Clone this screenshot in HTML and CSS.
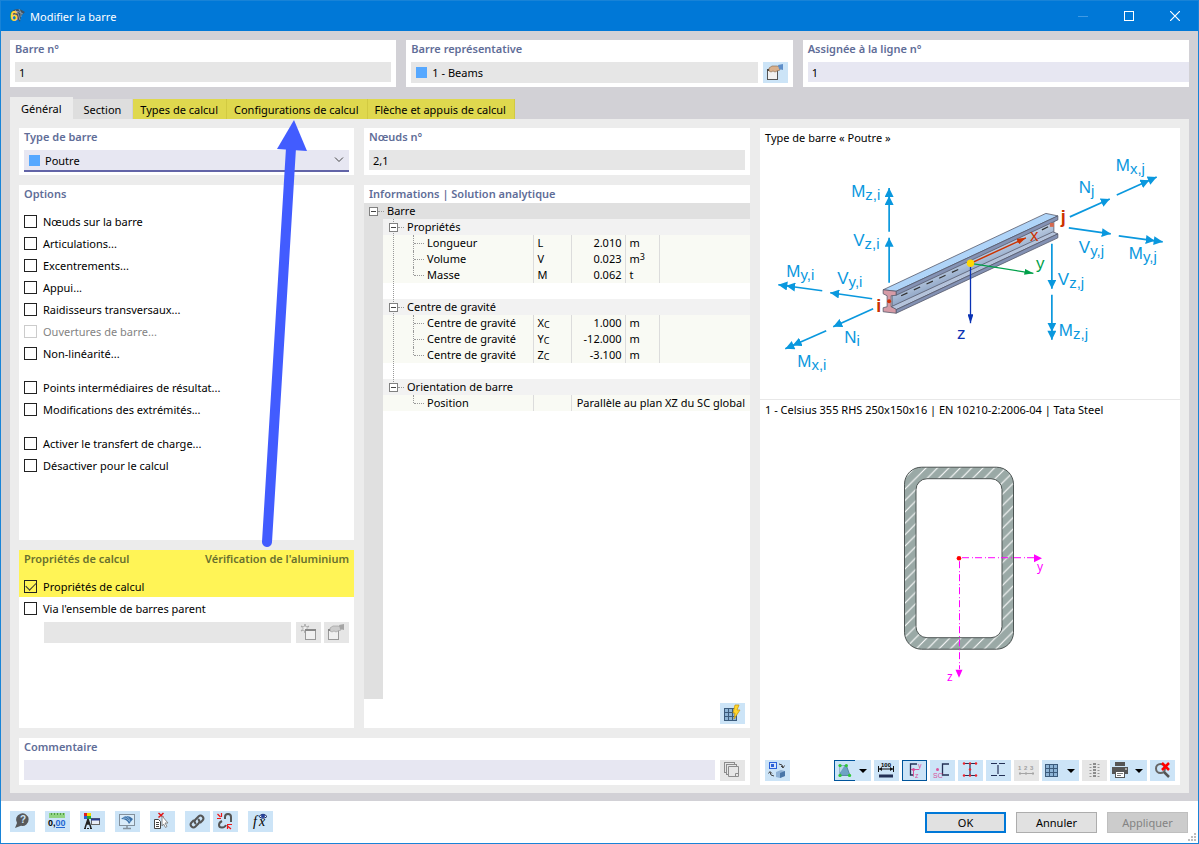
FILE: index.html
```html
<!DOCTYPE html>
<html lang="fr">
<head>
  <meta charset="UTF-8" />
  <meta name="viewport" content="width=device-width, initial-scale=1.0" />
  <title>Modifier la barre</title>
  <link rel="stylesheet" href="styles.css">
</head>
<body>
  <div class="window">
    <header class="titlebar">
      <svg class="app-icon" width="16" height="18" viewBox="0 0 16 18">
        <path d="M2 5Q8 -1 16 5L12 9L11 15L7 10z" fill="#3f5364"/>
        <path d="M4 5Q9 3 14 7M6 3Q10 6 11 13M10 2Q13 6 12 10" stroke="#8fa9bd" stroke-width=".8" fill="none"/>
        <text x="1" y="14" class="app-six">6</text>
      </svg>
      <h1>Modifier la barre</h1>
      <div class="window-buttons">
        <button type="button" aria-label="Réduire" disabled>
          <svg width="10" height="10" viewBox="0 0 10 10"><path d="M0 5.5H10" stroke="#3f9ae4"/></svg>
        </button>
        <button type="button" aria-label="Agrandir">
          <svg width="10" height="10" viewBox="0 0 10 10"><rect x=".5" y=".5" width="9" height="9" fill="none" stroke="#fff"/></svg>
        </button>
        <button type="button" aria-label="Fermer">
          <svg width="10" height="10" viewBox="0 0 10 10"><path d="M0 0L10 10M10 0L0 10" stroke="#fff" stroke-width="1.2"/></svg>
        </button>
      </div>
    </header>

    <main class="body">
      <!-- Identification -->
      <div class="top-cards">
        <div class="card">
          <label class="card-title" for="barNo">Barre n°</label>
          <input class="field" type="text" id="barNo" value="1" readonly>
        </div>
        <div class="card">
          <label class="card-title" for="repBar">Barre représentative</label>
          <div class="field-row">
            <div class="field combo tall">
              <span class="swatch"></span>
              <input type="text" id="repBar" value="1 - Beams" readonly>
            </div>
            <button type="button" class="icon-btn" aria-label="Modifier la barre représentative">
              <svg width="25" height="21" viewBox="0 0 25 21">
                <rect x="4.500" y="7.500" width="10" height="10" fill="#f2f2f2" stroke="#555"/>
                <path d="M4 8h11" stroke="#444" stroke-width="2"/>
                <path d="M6 6l3-2h5l3 1v3l-3 1-2 1-2-1-2 1-2-1z" fill="#d9b08c" stroke="#80644c" stroke-width=".6"/>
                <path d="M15 3l5-1v6l-4-1z" fill="#5f8fc9"/>
              </svg>
            </button>
          </div>
        </div>
        <div class="card flush">
          <label class="card-title" for="lineNo">Assignée à la ligne n°</label>
          <input class="field editable" type="text" id="lineNo" value="1">
        </div>
      </div>

      <nav class="tabs">
        <button type="button" class="tab active">Général</button>
        <button type="button" class="tab plain">Section</button>
        <button type="button" class="tab marked">Types de calcul</button>
        <button type="button" class="tab marked">Configurations de calcul</button>
        <button type="button" class="tab marked">Flèche et appuis de calcul</button>
      </nav>

      <div class="pane">
        <div class="card type-card">
          <label class="card-title" for="barType">Type de barre</label>
          <div class="field combo editable underlined">
            <span class="swatch"></span>
            <select id="barType"><option>Poutre</option></select>
            <svg class="chevron" width="10" height="6" viewBox="0 0 10 6"><path d="M1 .5L5 4.500L9 .5" fill="none" stroke="#444"/></svg>
          </div>
        </div>

        <div class="card nodes-card">
          <label class="card-title" for="nodes">Nœuds n°</label>
          <input class="field" type="text" id="nodes" value="2,1" readonly>
        </div>

        <!-- Options -->
        <div class="card options-card">
          <h2 class="card-title">Options</h2>
          <div class="checks">
            <label class="check"><input type="checkbox">Nœuds sur la barre</label>
            <label class="check"><input type="checkbox">Articulations...</label>
            <label class="check"><input type="checkbox">Excentrements...</label>
            <label class="check"><input type="checkbox">Appui...</label>
            <label class="check"><input type="checkbox">Raidisseurs transversaux...</label>
            <label class="check disabled"><input type="checkbox" disabled>Ouvertures de barre...</label>
            <label class="check"><input type="checkbox">Non-linéarité...</label>
          </div>
          <div class="checks">
            <label class="check"><input type="checkbox">Points intermédiaires de résultat...</label>
            <label class="check"><input type="checkbox">Modifications des extrémités...</label>
          </div>
          <div class="checks">
            <label class="check"><input type="checkbox">Activer le transfert de charge...</label>
            <label class="check"><input type="checkbox">Désactiver pour le calcul</label>
          </div>
        </div>

        <!-- Design properties -->
        <div class="card design-card">
          <div class="highlight">
            <div class="design-head">
              <h2 class="card-title">Propriétés de calcul</h2>
              <span class="card-title">Vérification de l'aluminium</span>
            </div>
            <label class="check"><input type="checkbox" checked>Propriétés de calcul</label>
          </div>
          <label class="check"><input type="checkbox" id="viaSet">Via l'ensemble de barres parent</label>
          <div class="field-row set-row">
            <input class="field tall" type="text" aria-label="Ensemble de barres parent" disabled>
            <div class="btn-pair">
              <button type="button" class="icon-btn off" aria-label="Nouvel ensemble" disabled>
                <svg width="25" height="21" viewBox="0 0 25 21">
                  <path d="M9 2l1 3 3-1-2 2.500 2 2.500-3-1-1 3-1-3-3 1 2-2.500L5 4l3 1z" fill="#eee" stroke="#999" stroke-width=".7"/>
                  <rect x="9.500" y="7.500" width="10" height="10" fill="#f0f0f0" stroke="#999"/>
                  <path d="M9 8h11" stroke="#888" stroke-width="2"/>
                </svg>
              </button>
              <button type="button" class="icon-btn off" aria-label="Modifier l'ensemble" disabled>
                <svg width="25" height="21" viewBox="0 0 25 21">
                  <rect x="4.500" y="7.500" width="10" height="10" fill="#f0f0f0" stroke="#999"/>
                  <path d="M4 8h11" stroke="#888" stroke-width="2"/>
                  <path d="M6 6l3-2h5l3 1v3l-3 1-2 1-2-1-2 1-2-1z" fill="#ccc" stroke="#999" stroke-width=".6"/>
                  <path d="M15 3l5-1v6l-4-1z" fill="#a5a5a5"/>
                </svg>
              </button>
            </div>
          </div>
        </div>

        <!-- Information tree -->
        <div class="card info-card">
          <h2 class="card-title">Informations | Solution analytique</h2>
          <div class="tree">
            <table>
              <colgroup>
                <col class="c-gutter"><col class="c-name"><col class="c-symbol"><col class="c-value"><col class="c-unit"><col>
              </colgroup>
              <tr class="root">
                <td colspan="6"><div class="node root-node"><span class="toggle"></span><span class="dash"></span>Barre</div></td>
              </tr>
              <tr class="group">
                <td></td>
                <td class="trunk" colspan="5"><div class="node"><span class="toggle"></span><span class="dash"></span>Propriétés</div></td>
              </tr>
              <tr class="leaf">
                <td></td><td class="trunk"><div class="node"><span class="branch"></span>Longueur</div></td>
                <td>L</td><td class="num">2.010</td><td>m</td><td></td>
              </tr>
              <tr class="leaf">
                <td></td><td class="trunk"><div class="node"><span class="branch"></span>Volume</div></td>
                <td>V</td><td class="num">0.023</td><td>m<sup>3</sup></td><td></td>
              </tr>
              <tr class="leaf">
                <td></td><td class="trunk"><div class="node"><span class="branch last"></span>Masse</div></td>
                <td>M</td><td class="num">0.062</td><td>t</td><td></td>
              </tr>
              <tr class="spacer"><td></td><td class="trunk" colspan="5"></td></tr>
              <tr class="group">
                <td></td>
                <td class="trunk" colspan="5"><div class="node"><span class="toggle"></span><span class="dash"></span>Centre de gravité</div></td>
              </tr>
              <tr class="leaf">
                <td></td><td class="trunk"><div class="node"><span class="branch"></span>Centre de gravité</div></td>
                <td>X<sub>C</sub></td><td class="num">1.000</td><td>m</td><td></td>
              </tr>
              <tr class="leaf">
                <td></td><td class="trunk"><div class="node"><span class="branch"></span>Centre de gravité</div></td>
                <td>Y<sub>C</sub></td><td class="num">-12.000</td><td>m</td><td></td>
              </tr>
              <tr class="leaf">
                <td></td><td class="trunk"><div class="node"><span class="branch last"></span>Centre de gravité</div></td>
                <td>Z<sub>C</sub></td><td class="num">-3.100</td><td>m</td><td></td>
              </tr>
              <tr class="spacer"><td></td><td class="trunk" colspan="5"></td></tr>
              <tr class="group">
                <td></td>
                <td class="trunk end" colspan="5"><div class="node"><span class="toggle"></span><span class="dash"></span>Orientation de barre</div></td>
              </tr>
              <tr class="leaf">
                <td></td><td><div class="node"><span class="branch last"></span>Position</div></td>
                <td></td><td class="num wide" colspan="3">Parallèle au plan XZ du SC global</td>
              </tr>
            </table>
          </div>
          <div class="info-actions">
            <button type="button" class="icon-btn" aria-label="Calculer">
              <svg width="25" height="21" viewBox="0 0 25 21">
                <rect x="4" y="5" width="13" height="13" fill="#8db4d6"/>
                <path d="M4.500 5v13M8.500 5v13M12.500 5v13M16.500 5v13M4 5.500h13M4 9.500h13M4 13.500h13M4 17.500h13" stroke="#3b5b7c"/>
                <path d="M15 2h4l-2 5h3l-6 9 1-6h-2z" fill="#ffd62e" stroke="#c79300" stroke-width=".7"/>
              </svg>
            </button>
          </div>
        </div>

        <div class="card comment-card">
          <label class="card-title" for="comment">Commentaire</label>
          <div class="field-row">
            <input class="field editable" type="text" id="comment">
            <button type="button" class="icon-btn off" aria-label="Commentaires enregistrés">
              <svg width="25" height="21" viewBox="0 0 25 21" fill="#e6e6e6" stroke="#8c8c8c">
                <rect x="4.500" y="2.500" width="10" height="10"/>
                <rect x="6.500" y="4.500" width="10" height="10"/>
                <path d="M8.500 6.500h10v10h-10zM15.500 16.500v-3h3"/>
              </svg>
            </button>
          </div>
        </div>

        <!-- Graphics -->
        <div class="card view-card">
          <section class="view beam-view">
            <h2>Type de barre « Poutre »</h2>
            <svg class="drawing force" viewBox="760 148 420 251">
              <defs>
                <marker id="f1" markerUnits="userSpaceOnUse" markerWidth="9" markerHeight="9" refX="9" refY="4.500" orient="auto"><path d="M0 0L9 4.500L0 9z" fill="#0a98de"/></marker>
                <marker id="f2" markerUnits="userSpaceOnUse" markerWidth="17" markerHeight="9" refX="17" refY="4.500" orient="auto"><path d="M0 0L9 4.500L0 9zM8 0L17 4.500L8 9z" fill="#0a98de"/></marker>
                <marker id="ax" markerUnits="userSpaceOnUse" markerWidth="9" markerHeight="6" refX="9" refY="3" orient="auto"><path d="M0 0L9 3L0 6z" fill="#cc3300"/></marker>
                <marker id="ay" markerUnits="userSpaceOnUse" markerWidth="9" markerHeight="6" refX="9" refY="3" orient="auto"><path d="M0 0L9 3L0 6z" fill="#00a04a"/></marker>
                <marker id="az" markerUnits="userSpaceOnUse" markerWidth="9" markerHeight="6" refX="9" refY="3" orient="auto"><path d="M0 0L9 3L0 6z" fill="#0a32b4"/></marker>
                <linearGradient id="web" gradientUnits="userSpaceOnUse" x1="970" y1="255" x2="977" y2="272">
                  <stop offset="0" stop-color="#c3d3e6"/><stop offset="1" stop-color="#8fa5c6"/>
                </linearGradient>
              </defs>

              <!-- I-beam -->
              <g stroke="#55596b" stroke-width=".8" stroke-linejoin="round">
                <path d="M892 294L1054 219V233L892 308z" fill="url(#web)"/>
                <path d="M891 307L1053 232L1058 234L896 310z" fill="#b4c3db"/>
                <path d="M896 310L1058 234V238L896 313.500z" fill="#8391b3"/>
                <path d="M883 290L1046 213.500L1058 216L896 291.500z" fill="#afd4f8"/>
                <path d="M896 291.500L1058 216V220L896 295.500z" fill="#8492b4"/>
                <path d="M883 290L896 291.500V295.500L891 296V307L896 309.500V313.500L883 312V308L887 307V296L883 294z" fill="#d69ba6"/>
              </g>
              <path d="M901 296L964 267M1042 230L1050 226" stroke="#333" stroke-width="1.200" stroke-dasharray="7 7"/>
              <circle cx="889" cy="301.500" r="2" fill="#d0340b"/>
              <rect x="1050" y="223" width="4" height="4" fill="#d5684e"/>

              <!-- end forces and moments -->
              <g stroke="#0a98de" stroke-width="1.700">
                <path d="M889 232V188" marker-end="url(#f2)"/>
                <path d="M889 283V238" marker-end="url(#f1)"/>
                <path d="M822 291L778 285" marker-end="url(#f2)"/>
                <path d="M872 299L830 293" marker-end="url(#f1)"/>
                <path d="M873 309L833 327" marker-end="url(#f1)"/>
                <path d="M826 331L785 349" marker-end="url(#f2)"/>
                <path d="M1070 217L1110 199" marker-end="url(#f1)"/>
                <path d="M1117 195L1157 177" marker-end="url(#f2)"/>
                <path d="M1069 228L1111 234" marker-end="url(#f1)"/>
                <path d="M1119 236L1163 242" marker-end="url(#f2)"/>
                <path d="M1052 244V289" marker-end="url(#f1)"/>
                <path d="M1052 295V340" marker-end="url(#f2)"/>
              </g>

              <!-- local axes -->
              <path d="M970.500 263.500L1026 238" stroke="#cc3300" stroke-width="1.500" marker-end="url(#ax)"/>
              <path d="M970.500 263.500L1033.500 273.500" stroke="#00a04a" stroke-width="1.300" marker-end="url(#ay)"/>
              <path d="M970.500 263.500V323.500" stroke="#0a32b4" stroke-width="1.300" marker-end="url(#az)"/>
              <circle cx="970.500" cy="263.500" r="3.700" fill="#ffd800"/>

              <text x="851" y="197">M<tspan class="index" dy="3">z,i</tspan></text>
              <text x="853" y="246">V<tspan class="index" dy="3">z,i</tspan></text>
              <text x="786" y="277">M<tspan class="index" dy="3">y,i</tspan></text>
              <text x="837" y="284">V<tspan class="index" dy="3">y,i</tspan></text>
              <text x="844" y="343">N<tspan class="index" dy="3">i</tspan></text>
              <text x="797" y="367">M<tspan class="index" dy="3">x,i</tspan></text>
              <text x="1079" y="193">N<tspan class="index" dy="3">j</tspan></text>
              <text x="1116" y="171">M<tspan class="index" dy="3">x,j</tspan></text>
              <text x="1079" y="253">V<tspan class="index" dy="3">y,j</tspan></text>
              <text x="1129" y="259">M<tspan class="index" dy="3">y,j</tspan></text>
              <text x="1058" y="285">V<tspan class="index" dy="3">z,j</tspan></text>
              <text x="1059" y="336">M<tspan class="index" dy="3">z,j</tspan></text>
              <text class="end-mark" x="876" y="312">i</text>
              <text class="end-mark" x="1061" y="223">j</text>
              <text class="axis-x" x="1030" y="241">x</text>
              <text class="axis-y" x="1036" y="269">y</text>
              <text class="axis-z" x="957" y="339">z</text>
            </svg>
          </section>

          <section class="view section-view">
            <h2>1 - Celsius 355 RHS 250x150x16 | EN 10210-2:2006-04 | Tata Steel</h2>
            <svg class="drawing" viewBox="760 420 420 340">
              <defs>
                <pattern id="hatch" patternUnits="userSpaceOnUse" x="904" y="467" width="11.400" height="11.400">
                  <rect width="12" height="12" fill="#9aa9a6"/>
                  <path d="M-1 12.400L12.400 -1M-1 1L1 -1M10.400 12.400L12.400 10.400" stroke="#fff" stroke-width="1.100"/>
                </pattern>
              </defs>
              <rect x="904.500" y="467" width="109" height="182" rx="17" fill="url(#hatch)" stroke="#4d5453"/>
              <rect x="916" y="478.500" width="86" height="159" rx="11" fill="#fff" stroke="#4d5453"/>
              <g stroke="#f0f" stroke-dasharray="7 3 1 2">
                <path d="M962 557.500H1034"/>
                <path d="M959.500 561V669"/>
              </g>
              <path d="M1034 554L1042 558L1034 562zM955.500 669.500H962.500L959 677.500z" fill="#f0f"/>
              <circle cx="959" cy="558" r="2.300" fill="#f00"/>
              <text class="sec-axis" x="1037" y="571">y</text>
              <text class="sec-axis" x="947" y="681">z</text>
            </svg>

            <div class="toolbar">
              <button type="button" class="icon-btn first" aria-label="Changer de vue">
                <svg width="25" height="21" viewBox="0 0 25 21">
                  <rect x="4.500" y="2.500" width="7" height="6" fill="#d6e6fa" stroke="#2b62d9"/>
                  <rect x="6" y="4" width="3" height="3" fill="#2b62d9"/>
                  <path d="M11 12l5-2 4 1v5l-5 2-4-1z" fill="#8fb2d6"/><path d="M15 13l5-2v5l-5 2z" fill="#4a76a8"/>
                  <path d="M14 4q4 0 4 4M16 6l2 2 1.500-2.500M9 16q-4 0-4-4M7 13.500l-2-2-1.500 2" stroke="#444" fill="none"/>
                </svg>
              </button>
              <button type="button" class="icon-btn split" aria-label="Affichage de la section">
                <svg class="pressed" width="21" height="21" viewBox="0 0 21 21">
                  <path d="M5 5h7l4 11H5z" fill="#6fa3c4" stroke="#4f7fa0"/>
                  <path d="M5 5h5L5 13z" fill="#b9d7e8"/>
                  <g fill="#2fc837"><circle cx="5" cy="5" r="1.800"/><circle cx="12" cy="5" r="1.800"/><circle cx="5" cy="16" r="1.800"/><circle cx="15.500" cy="16" r="1.800"/></g>
                </svg>
                <span class="caret"></span>
              </button>
              <button type="button" class="icon-btn" aria-label="Dimensions">
                <svg width="25" height="21" viewBox="0 0 25 21">
                  <path d="M4 9h16M4.500 6v6M19.500 6v6" stroke="#111"/>
                  <path d="M5 9l3-2v4zM19 9l-3-2v4z" fill="#111"/>
                  <path d="M5 16h14" stroke="#233055" stroke-width="3"/>
                  <text class="tiny-num" x="7" y="7">100</text>
                </svg>
              </button>
              <button type="button" class="icon-btn framed" aria-label="Axes principaux">
                <svg width="25" height="21" viewBox="0 0 25 21">
                  <path d="M15 4H8.500v11H12" fill="none" stroke="#233055" stroke-width="1.300"/>
                  <path d="M9 9.500h8M11.500 9.500v7" stroke="#d9539b"/><circle cx="11.500" cy="9.500" r="1.500" fill="#d9539b"/>
                  <text class="tiny-axis" x="16" y="8">y</text><text class="tiny-axis" x="13" y="18">z</text>
                </svg>
              </button>
              <button type="button" class="icon-btn" aria-label="Centre de cisaillement">
                <svg width="25" height="21" viewBox="0 0 25 21">
                  <path d="M19 4h-6.500v11H19" fill="none" stroke="#233055" stroke-width="1.300"/>
                  <circle cx="7.500" cy="9.500" r="1.500" fill="#d9539b"/>
                  <text class="tiny-sc" x="3" y="18">SC</text>
                </svg>
              </button>
              <button type="button" class="icon-btn" aria-label="Points de contrainte">
                <svg width="25" height="21" viewBox="0 0 25 21">
                  <path d="M5 3.500h14M5 15.500h14M12 4v11" stroke="#233055" stroke-width="1.200"/>
                  <g fill="#f0202a"><circle cx="6" cy="3.500" r="1.200"/><circle cx="12" cy="3.500" r="1.200"/><circle cx="18" cy="3.500" r="1.200"/><circle cx="12" cy="9.500" r="1.200"/><circle cx="6" cy="15.500" r="1.200"/><circle cx="12" cy="15.500" r="1.200"/><circle cx="18" cy="15.500" r="1.200"/></g>
                </svg>
              </button>
              <button type="button" class="icon-btn" aria-label="Parties de section">
                <svg width="25" height="21" viewBox="0 0 25 21">
                  <path d="M5 3.500h6M13 3.500h6M5 15.500h6M13 15.500h6M12 5v9" stroke="#233055" stroke-width="1.200"/>
                </svg>
              </button>
              <button type="button" class="icon-btn off" aria-label="Numérotation" disabled>
                <svg width="25" height="21" viewBox="0 0 25 21">
                  <path d="M5 13.500h15M6 12v3M12 12v3M19 12v3" stroke="#a5a5a5"/>
                  <text class="tiny-off" x="4" y="10">1</text><text class="tiny-off" x="10" y="10">2</text><text class="tiny-off" x="16" y="10">3</text>
                </svg>
              </button>
              <button type="button" class="icon-btn split" aria-label="Grille">
                <svg width="21" height="21" viewBox="0 0 21 21">
                  <rect x="3" y="4" width="13" height="13" fill="#8db4d6"/>
                  <path d="M3.500 4v13M7.500 4v13M11.500 4v13M15.500 4v13M3 4.500h13M3 8.500h13M3 12.500h13M3 16.500h13" stroke="#3b5b7c"/>
                </svg>
                <span class="caret"></span>
              </button>
              <button type="button" class="icon-btn off" aria-label="Tableau des valeurs" disabled>
                <svg width="25" height="21" viewBox="0 0 25 21">
                  <path d="M12.500 3v15" stroke="#8c8c8c" stroke-width="3" stroke-dasharray="2 1"/>
                  <path d="M8.500 4v14M16.500 4v14" stroke="#999" stroke-width="2" stroke-dasharray="1 2"/>
                </svg>
              </button>
              <button type="button" class="icon-btn split" aria-label="Imprimer">
                <svg width="21" height="21" viewBox="0 0 21 21">
                  <path d="M5 2h10v4H5zM2 7h16v7H2z" fill="#555"/>
                  <rect x="5.500" y="11.500" width="9" height="6" fill="#fff" stroke="#555"/>
                  <path d="M7 13.500h6M7 15.500h4" stroke="#777"/>
                  <path d="M15 9h2" stroke="#fff"/>
                </svg>
                <span class="caret"></span>
              </button>
              <button type="button" class="icon-btn" aria-label="Réinitialiser le zoom">
                <svg width="25" height="21" viewBox="0 0 25 21">
                  <circle cx="10.500" cy="8.500" r="4.500" fill="none" stroke="#666" stroke-width="2"/>
                  <path d="M14 12l5 5" stroke="#555" stroke-width="2.500"/>
                  <path d="M12 3l7 7M19 3l-7 7" stroke="#f00" stroke-width="2.500"/>
                </svg>
              </button>
            </div>
          </section>
        </div>

        <!-- arrow from the design properties to the design tabs -->
        <svg class="pointer" width="50" height="430" viewBox="260 120 50 430">
          <path d="M291 148L267 542" stroke="#425cff" stroke-width="10" stroke-linecap="round"/>
          <path d="M294 120L307 151L277 149z" fill="#425cff"/>
        </svg>
      </div>
    </main>

    <footer class="footer">
      <div class="footer-tools">
        <button type="button" class="icon-btn" aria-label="Aide">
          <svg width="25" height="21" viewBox="0 0 25 21">
            <path d="M5 17l2-5a6.300 6.300 0 1 1 4 2.800z" fill="#58595b"/>
            <text class="help-mark" x="10" y="12">?</text>
          </svg>
        </button>
        <button type="button" class="icon-btn" aria-label="Unités et décimales">
          <svg width="25" height="21" viewBox="0 0 25 21">
            <rect x="4" y="2" width="16" height="5" fill="#92d483"/>
            <path d="M6.500 2v2M9.500 2v2M12.500 2v2M15.500 2v2M18.500 2v2" stroke="#4f9c45"/>
            <text class="digits" x="3" y="15">0,<tspan fill="#2366d1">00</tspan></text>
            <path d="M11 16.500h9" stroke="#2366d1"/>
          </svg>
        </button>
        <button type="button" class="icon-btn" aria-label="Affichage">
          <svg width="25" height="21" viewBox="0 0 25 21">
            <path d="M4 2h3v3H4z" fill="#e02020"/><path d="M7 2h4v3H7z" fill="#f5d800"/><path d="M4 5h3v3H4z" fill="#2b5fd0"/><path d="M7 5h4v3H7z" fill="#24a838"/>
            <path d="M8 8L5 17M8 8l3 9M8 8v5M6 13h4" stroke="#222" stroke-width="1.500"/>
            <path d="M4 17.500h9" stroke="#222" stroke-dasharray="2 1"/>
            <rect x="11.500" y="7.500" width="8" height="6" fill="#e9eef7" stroke="#666"/><path d="M11 8.500h9" stroke="#2b3f8f" stroke-width="2"/>
          </svg>
        </button>
        <button type="button" class="icon-btn" aria-label="Vue">
          <svg width="25" height="21" viewBox="0 0 25 21">
            <rect x="4.500" y="3.500" width="15" height="11" fill="#d9ebf9" stroke="#83909c"/>
            <path d="M6 8Q12 2 18 8L14 13Q12 8 6 8z" fill="#3a70a8"/>
            <path d="M8 7Q12 6 14 10M11 5Q15 7 15 11" stroke="#a8c9e6" fill="none" stroke-width=".7"/>
            <path d="M12 14v3M8 17.500h8" stroke="#83909c" stroke-width="1.500"/>
          </svg>
        </button>
        <button type="button" class="icon-btn" aria-label="Sélection">
          <svg width="25" height="21" viewBox="0 0 25 21">
            <path d="M4.500 8.500h4l2 2v7h-6z" fill="#fff" stroke="#444"/>
            <path d="M6 11.500h3M6 13.500h3M6 15.500h3" stroke="#444"/>
            <path d="M8.500 2l5 4.500M13.500 2l-5 4.500" stroke="#e01515" stroke-width="1.500"/>
            <path d="M12 5l6 7h-3l2 3.500-1.500 1-2-3.500-1.500 2z" fill="#fff" stroke="#888"/>
          </svg>
        </button>
        <div class="btn-pair">
          <button type="button" class="icon-btn" aria-label="Lier">
            <svg width="25" height="21" viewBox="0 0 25 21" fill="none" stroke="#555" stroke-width="2" stroke-linecap="round">
              <path d="M10.500 12.500q-2-2 0-4l3-3q2-2 4 0t0 4l-2 2"/>
              <path d="M13.500 8.500q2 2 0 4l-3 3q-2 2-4 0t0-4l2-2"/>
            </svg>
          </button>
          <button type="button" class="icon-btn" aria-label="Délier">
            <svg width="25" height="21" viewBox="0 0 25 21" fill="none" stroke="#555" stroke-width="2">
              <path d="M12 8V6q0-3 3-3t3 3v5"/>
              <path d="M9 10q-3 1.500-3 4t3 2.500q3 0 4-2.500"/>
              <path d="M8.500 2v4M4.500 3l3 3M4 7.500h4M14 13.500h5M14.500 15l3.500 3M14.500 14v4" stroke="#f01818" stroke-width="1.200"/>
            </svg>
          </button>
        </div>
        <button type="button" class="icon-btn" aria-label="Formules">
          <svg width="25" height="21" viewBox="0 0 25 21">
            <text class="formula" x="5" y="15">f<tspan x="11">x</tspan></text>
            <path d="M11 5.500Q15 1 19 5.500Q15 9 11 5.500z" fill="#fff" stroke="#1d2c63"/>
            <circle cx="15" cy="5" r="2" fill="#26419b"/>
          </svg>
        </button>
      </div>
      <div class="footer-buttons">
        <button type="button" class="btn btn-default">OK</button>
        <button type="button" class="btn">Annuler</button>
        <button type="button" class="btn" disabled>Appliquer</button>
      </div>
      <svg class="grip" width="8" height="8" viewBox="0 0 8 8">
        <path d="M6 0h2v2H6zM3 3h2v2H3zM6 3h2v2H6zM0 6h2v2H0zM3 6h2v2H3zM6 6h2v2H6z" fill="#bdbdbd"/>
      </svg>
    </footer>
  </div>
</body>
</html>
```

FILE: styles.css
```css
* {
  margin: 0;
  padding: 0;
  box-sizing: border-box;
}

body {
  font-family: "Noto Sans", "Open Sans", sans-serif;
  font-size: 11px;
  color: #000;
}

button, input, select {
  font: inherit;
  color: inherit;
  border: none;
  border-radius: 0;
  background: none;
}

button svg {
  display: block;
}

.window {
  display: flex;
  flex-direction: column;
  min-height: 100vh;
  border: 1px solid #1883d7;
  background: #fff;
}

/* Title bar */
.titlebar {
  display: flex;
  align-items: center;
  height: 30px;
  padding-left: 8px;
  background: #0078d7;
  color: #fff;
}

.titlebar h1 {
  flex: 1;
  margin-left: 5px;
  font-size: 11px;
  font-weight: normal;
}

.app-six {
  font: bold 14px "Liberation Sans", sans-serif;
  fill: #ffd23c;
}

.window-buttons {
  display: flex;
}

.window-buttons button {
  display: flex;
  align-items: center;
  justify-content: center;
  width: 46px;
  height: 30px;
}

/* Cards and fields */
.body {
  flex: 1;
  display: flex;
  flex-direction: column;
  padding: 9px 9px 8px;
  background: #d2d1d6;
}

.top-cards {
  display: grid;
  grid-template-columns: repeat(3, minmax(0, 1fr));
  gap: 10px;
  margin-bottom: 10px;
}

.card {
  min-width: 0;
  min-height: 47px;
  padding: 0 5px;
  background: #fff;
}

.card.flush {
  padding-right: 0;
}

.card-title {
  display: block;
  height: 22px;
  line-height: 18px;
  font-size: 11px;
  font-weight: 600;
  color: #5f6d98;
}

.field {
  display: block;
  width: 100%;
  height: 20px;
  padding: 0 4px;
  background: #e6e6e6;
}

.field.tall {
  height: 21px;
}

.field.editable {
  background: #e7e7f2;
}

.field-row {
  display: flex;
  gap: 5px;
}

.field-row .field {
  flex: 1;
  min-width: 0;
}

.field.combo {
  display: flex;
  align-items: center;
  gap: 5px;
  padding: 0 5px;
}

.combo input,
.combo select {
  flex: 1;
  min-width: 0;
  appearance: none;
}

.field.underlined {
  height: 22px;
  border-bottom: 2px solid #6264a7;
}

.swatch {
  width: 11px;
  height: 11px;
  background: #56a8ff;
}

.icon-btn {
  flex: none;
  height: 21px;
  background: #cce4f7;
}

.icon-btn.off {
  background: #e6e6e6;
}

.btn-pair {
  display: flex;
  gap: 3px;
}

/* Tabs */
.tabs {
  display: flex;
  align-items: flex-end;
}

.tab {
  height: 20px;
  background: #dedede;
}

.tab.active {
  height: 22px;
  padding: 0 11px;
  background: #ececec;
}

.tab.plain {
  margin-right: 1px;
  padding: 0 11px;
}

.tab.marked {
  padding: 0 8px 0 7px;
  background: #dfd84e;
  border-right: 1px solid #d2ca42;
}

/* Main pane */
.pane {
  position: relative;
  flex: 1;
  display: grid;
  grid-template-columns: minmax(0, 335fr) minmax(0, 386fr) minmax(0, 420fr);
  grid-template-rows: auto 1fr auto auto;
  grid-template-areas:
    "type nodes view"
    "options info view"
    "design info view"
    "comment comment view";
  gap: 10px;
  padding: 9px 9px 8px;
  background: #ececec;
}

.type-card { grid-area: type; }
.nodes-card { grid-area: nodes; }
.options-card { grid-area: options; }
.design-card { grid-area: design; }
.info-card { grid-area: info; }
.comment-card { grid-area: comment; }
.view-card { grid-area: view; }

.checks {
  margin-bottom: 12px;
}

.options-card .card-title {
  height: 25px;
}

.check {
  display: flex;
  align-items: center;
  gap: 6px;
  height: 22px;
}

.check input {
  appearance: none;
  display: flex;
  align-items: center;
  justify-content: center;
  width: 13px;
  height: 13px;
  border: 1px solid #222;
}

.check input:checked::after {
  content: "";
  width: 9px;
  height: 5px;
  margin-bottom: 3px;
  border: solid #333;
  border-width: 0 0 1px 1px;
  transform: rotate(-45deg);
}

.check.disabled {
  color: #838383;
}

.check.disabled input {
  border-color: #ccc;
}

.design-card {
  min-height: 178px;
}

.highlight {
  margin: 0 -5px;
  padding: 0 5px;
  background: #fff456;
}

.highlight .card-title {
  height: 25px;
  color: #69702e;
}

.design-head {
  display: flex;
  justify-content: space-between;
}

.set-row {
  margin-top: 3px;
  padding-left: 20px;
}

.comment-card .field-row {
  height: 20px;
}

/* Information tree */
.info-card {
  display: flex;
  flex-direction: column;
  padding: 0;
}

.info-card .card-title {
  height: 18px;
  padding-left: 5px;
}

.tree {
  flex: 1;
  background: linear-gradient(to right, #e0e0e0 19px, transparent 19px);
}

.tree table {
  width: 100%;
  table-layout: fixed;
  border-collapse: collapse;
}

.c-gutter { width: 19px; }
.c-name { width: 150px; }
.c-symbol { width: 38px; }
.c-value { width: 54px; }
.c-unit { width: 34px; }

.tree td {
  height: 16px;
  line-height: 16px;
  white-space: nowrap;
}

.tree .root {
  background: #e0e0e0;
}

.tree .group td + td {
  background-color: #f2f2f2;
}

.tree .leaf td + td {
  background-color: #f9faf4;
}

.leaf td:nth-child(n+3) {
  padding-left: 4px;
}

.leaf td:nth-child(n+2):not(:last-child) {
  border-right: 1px solid #dcdcdc;
}

.leaf .num {
  padding-right: 3px;
  text-align: right;
}

.leaf .num.wide {
  padding-right: 5px;
}

.trunk {
  background: repeating-linear-gradient(#999 0 1px, transparent 1px 2px) 10px 0 / 1px 100% no-repeat;
}

.trunk.end {
  background-size: 1px 8px;
}

.node {
  display: flex;
  align-items: center;
  height: 16px;
  padding-left: 6px;
}

.leaf .node {
  padding-left: 30px;
}

.root-node {
  padding-left: 5px;
}

.toggle {
  width: 9px;
  height: 9px;
  border: 1px solid #808080;
  background: linear-gradient(#444, #444) center / 5px 1px no-repeat #fff;
}

.dash {
  width: 6px;
  margin-right: 3px;
  border-top: 1px dotted #999;
}

.branch {
  width: 11px;
  height: 16px;
  margin-right: 3px;
  border-left: 1px dotted #999;
}

.branch::after {
  content: "";
  display: block;
  height: 8px;
  border-bottom: 1px dotted #999;
}

.branch.last {
  align-self: flex-start;
  height: 8px;
}

.tree sub,
.tree sup {
  font-size: 9px;
  line-height: 0;
}

.tree sub {
  vertical-align: -1px;
}

.tree sup {
  vertical-align: 3px;
}

.info-actions {
  display: flex;
  justify-content: flex-end;
  padding: 4px 5px;
}

/* Graphics */
.view-card {
  display: flex;
  flex-direction: column;
  padding: 0;
}

.view {
  display: flex;
  flex-direction: column;
  min-height: 0;
}

.beam-view {
  flex: 271 0 0;
  border-bottom: 1px solid #e8e8e8;
}

.section-view {
  flex: 386 0 0;
}

.view h2 {
  padding-left: 5px;
  font-size: 11px;
  font-weight: normal;
  line-height: 20px;
}

.drawing {
  flex: 1 1 0;
  width: 100%;
  min-height: 0;
}

.force text {
  font: 17px "Liberation Sans", Arial, sans-serif;
  fill: #0a98de;
}

.force .index {
  font-size: 15px;
}

.force .end-mark {
  font-weight: bold;
  font-size: 18px;
  fill: #cc3300;
}

.force .axis-x { fill: #cc3300; }
.force .axis-y { fill: #00a04a; }
.force .axis-z { fill: #0a32b4; }

.sec-axis {
  font-size: 12px;
  fill: #f0f;
}

.toolbar {
  display: flex;
  gap: 3px;
  padding: 0 5px 4px;
}

.toolbar .first {
  margin-right: auto;
}

.split {
  display: flex;
  align-items: center;
  width: 37px;
}

.pressed {
  border: solid #00559b;
  border-width: 1px 0 1px 1px;
}

.framed {
  outline: 1px solid #00559b;
  outline-offset: -1px;
}

.caret {
  margin-left: 4px;
  border: 4px solid transparent;
  border-top-color: #000;
  border-bottom: none;
}

.tiny-num {
  font: bold 6px "Liberation Sans", sans-serif;
}

.tiny-axis,
.tiny-sc {
  font: 7px "Liberation Sans", sans-serif;
  fill: #d9539b;
}

.tiny-off {
  font: bold 6px "Liberation Sans", sans-serif;
  fill: #a0a0a0;
}

.pointer {
  position: absolute;
  top: 1px;
  left: 250px;
  pointer-events: none;
}

/* Footer */
.footer {
  position: relative;
  display: flex;
  align-items: flex-start;
  justify-content: space-between;
  height: 42px;
  padding: 10px 10px 0 9px;
}

.footer-tools,
.footer-buttons {
  display: flex;
  gap: 10px;
}

.footer-buttons {
  padding-top: 1px;
}

.btn {
  width: 81px;
  height: 21px;
  border: 1px solid #adadad;
  background: #e1e1e1;
}

.btn-default {
  border: 2px solid #0078d7;
}

.btn:disabled {
  border-color: #bfbfbf;
  background: #ccc;
  color: #838383;
}

.grip {
  position: absolute;
  right: 2px;
  bottom: 2px;
}

.help-mark {
  font: bold 10px "Liberation Sans", sans-serif;
  fill: #cce4f7;
}

.digits {
  font: bold 9px "Liberation Sans", sans-serif;
}

.formula {
  font: italic 14px "Liberation Serif", serif;
}
```
